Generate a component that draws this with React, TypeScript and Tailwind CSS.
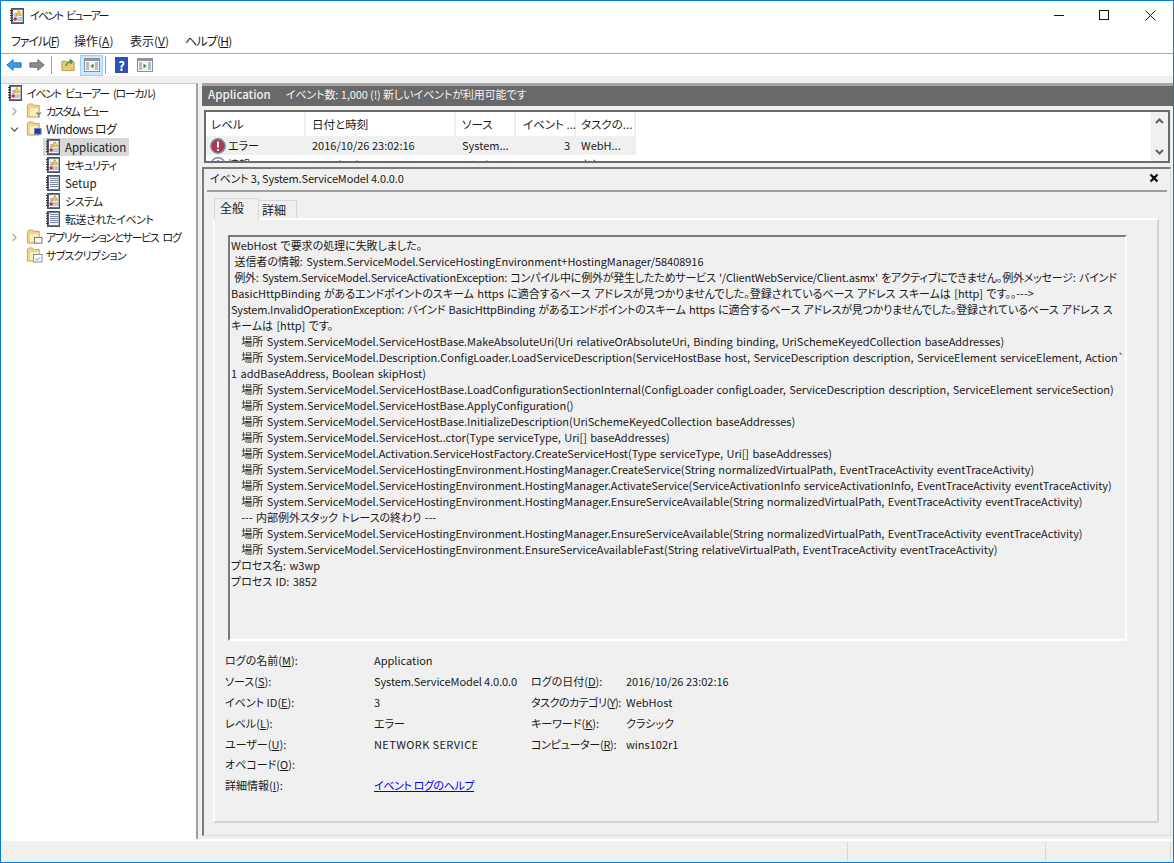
import type { ReactNode } from 'react';
import { ChevronDown, ChevronRight } from 'lucide-react';

const font = "font-['Noto_Sans_CJK_JP','Noto_Sans',sans-serif] [font-feature-settings:'palt']";

const bodyLines = [
  'WebHost で要求の処理に失敗しました。',
  ' 送信者の情報: System.ServiceModel.ServiceHostingEnvironment+HostingManager/58408916',
  ' 例外: System.ServiceModel.ServiceActivationException: コンパイル中に例外が発生したためサービス \'/ClientWebService/Client.asmx\' をアクティブにできません。例外メッセージ: バインド',
  'BasicHttpBinding があるエンドポイントのスキーム https に適合するベース アドレスが見つかりませんでした。登録されているベース アドレス スキームは [http] です。。--->',
  'System.InvalidOperationException: バインド BasicHttpBinding があるエンドポイントのスキーム https に適合するベース アドレスが見つかりませんでした。登録されているベース アドレス ス',
  'キームは [http] です。',
  '   場所 System.ServiceModel.ServiceHostBase.MakeAbsoluteUri(Uri relativeOrAbsoluteUri, Binding binding, UriSchemeKeyedCollection baseAddresses)',
  '   場所 System.ServiceModel.Description.ConfigLoader.LoadServiceDescription(ServiceHostBase host, ServiceDescription description, ServiceElement serviceElement, Action`',
  '1 addBaseAddress, Boolean skipHost)',
  '   場所 System.ServiceModel.ServiceHostBase.LoadConfigurationSectionInternal(ConfigLoader configLoader, ServiceDescription description, ServiceElement serviceSection)',
  '   場所 System.ServiceModel.ServiceHostBase.ApplyConfiguration()',
  '   場所 System.ServiceModel.ServiceHostBase.InitializeDescription(UriSchemeKeyedCollection baseAddresses)',
  '   場所 System.ServiceModel.ServiceHost..ctor(Type serviceType, Uri[] baseAddresses)',
  '   場所 System.ServiceModel.Activation.ServiceHostFactory.CreateServiceHost(Type serviceType, Uri[] baseAddresses)',
  '   場所 System.ServiceModel.ServiceHostingEnvironment.HostingManager.CreateService(String normalizedVirtualPath, EventTraceActivity eventTraceActivity)',
  '   場所 System.ServiceModel.ServiceHostingEnvironment.HostingManager.ActivateService(ServiceActivationInfo serviceActivationInfo, EventTraceActivity eventTraceActivity)',
  '   場所 System.ServiceModel.ServiceHostingEnvironment.HostingManager.EnsureServiceAvailable(String normalizedVirtualPath, EventTraceActivity eventTraceActivity)',
  '   --- 内部例外スタック トレースの終わり ---',
  '   場所 System.ServiceModel.ServiceHostingEnvironment.HostingManager.EnsureServiceAvailable(String normalizedVirtualPath, EventTraceActivity eventTraceActivity)',
  '   場所 System.ServiceModel.ServiceHostingEnvironment.EnsureServiceAvailableFast(String relativeVirtualPath, EventTraceActivity eventTraceActivity)',
  'プロセス名: w3wp',
  'プロセス ID: 3852',
];

function Mn({ label, k, tail = ':', className = '' }: { label: string; k: string; tail?: string; className?: string }) {
  return (
    <span className={`whitespace-nowrap ${className}`}>
      {label}(<span className="underline">{k}</span>){tail}
    </span>
  );
}

function LogBook({ warn = false, size = 16 }: { warn?: boolean; size?: number }) {
  return (
    <svg width={size} height={size} viewBox="0 0 16 16" className="shrink-0">
      <rect x="2.5" y="0.5" width="12" height="15" fill="#6d7890" stroke="#4a5266" />
      <rect x="4" y="2" width="9.5" height="12" fill="#f2f4f8" />
      <path d="M1 2.5h3M1 5h3M1 7.5h3M1 10h3M1 12.5h3" stroke="#333" />
      {warn ? (
        <>
          <path d="M5 6h3M5 8h3M8 10h5M8 12h5" stroke="#8d97ab" />
          <path d="M9.8 2.5l2.9 4.8H6.9z" fill="#f5d328" stroke="#b58a10" strokeWidth="0.6" />
          <circle cx="6.2" cy="11" r="1.8" fill="#c8303a" />
        </>
      ) : (
        <path d="M5 3.5h8M5 5.5h8M5 7.5h8M5 9.5h8M5 11.5h8" stroke="#7d89a0" />
      )}
    </svg>
  );
}

function Folder({ children }: { children?: ReactNode }) {
  return (
    <svg width="17" height="16" viewBox="0 0 18 17" className="shrink-0">
      <path d="M1.5 15V2.5L3 1h4l1 1.5h6V15z" fill="#f2d58a" stroke="#c5a45a" />
      <path d="M3.5 5h10v9h-10z" fill="#fbeebf" stroke="#e2c77c" strokeWidth="0.6" />
      {children}
    </svg>
  );
}

function TreeRow({
  indent,
  arrow,
  icon,
  label,
  labelClass = '',
  selected = false,
}: {
  indent: string;
  arrow?: 'right' | 'down';
  icon: ReactNode;
  label: string;
  labelClass?: string;
  selected?: boolean;
}) {
  return (
    <div className={`flex h-[18px] items-center ${indent}`}>
      {arrow && (
        <span className="mr-[5px] flex w-[14px] shrink-0 justify-center">
          {arrow === 'right' && <ChevronRight size={13} strokeWidth={2} className="text-[#a6a6a6]" />}
          {arrow === 'down' && <ChevronDown size={13} strokeWidth={2} className="text-[#404040]" />}
        </span>
      )}
      <span
        className={`flex h-[18px] items-center whitespace-nowrap leading-[18px] ${selected ? '-ml-[2px] bg-[#d9d9d9] pl-[2px] pr-[3px]' : ''}`}
      >
        <span className="flex w-[16px] shrink-0 justify-center">{icon}</span>
        <span className={`ml-[4px] ${labelClass}`}>{label}</span>
      </span>
    </div>
  );
}

function PanelIcon({ side }: { side: 'left' | 'right' }) {
  return (
    <svg width="16" height="14" viewBox="0 0 16 14">
      <rect x="0.5" y="0.5" width="15" height="13" fill="#f4f4f4" stroke="#8a8f98" />
      <rect x="1" y="1" width="14" height="2" fill="#8d97a6" />
      <path d="M2 5h3M2 7h3M2 9h3M2 11h3M11 5h3M11 7h3M11 9h3M11 11h3" stroke="#7f8790" />
      {side === 'left' ? <path d="M9.5 5.5v5L6.5 8z" fill="#2f9a3c" /> : <path d="M6.5 5.5v5l3-2.5z" fill="#2f9a3c" />}
    </svg>
  );
}

export default function App() {
  return (
    <div className={`${font} flex h-[863px] w-[1174px] flex-col overflow-hidden border border-[#0a7bd0] bg-white text-[11px] leading-none text-[#1a1a1a]`}>
      {/* title bar */}
      <div className="flex h-[29px] shrink-0 items-center">
        <span className="ml-[8px]"><LogBook warn /></span>
        <span className="ml-[5px] pb-[1px] tracking-[-1.7px] [word-spacing:3px]">イベント ビューアー</span>
        <div className="ml-auto flex items-center">
          <svg width="46" height="29" viewBox="0 0 46 29"><path d="M18 14.5h10" stroke="#111" /></svg>
          <svg width="46" height="29" viewBox="0 0 46 29"><rect x="17.5" y="9.5" width="9" height="9" fill="none" stroke="#111" /></svg>
          <svg width="45" height="29" viewBox="0 0 45 29"><path d="M17.5 9.5l10 10M27.5 9.5l-10 10" stroke="#111" /></svg>
        </div>
      </div>

      {/* menu */}
      <div className="flex h-[24px] shrink-0 items-center border-b border-[#a9a9b4] pb-[1px] pl-[10px] text-[12px]">
        <span className="w-[63px]"><Mn label="ファイル" k="F" tail="" className="tracking-[-1.2px]" /></span>
        <span className="w-[56px]"><Mn label="操作" k="A" tail="" /></span>
        <span className="w-[55px]"><Mn label="表示" k="V" tail="" /></span>
        <span><Mn label="ヘルプ" k="H" tail="" className="tracking-[-0.8px]" /></span>
      </div>

      {/* toolbar */}
      <div className="flex h-[22px] shrink-0 items-center pl-[5px]">
        <svg width="16" height="14" viewBox="0 0 18 14"><path d="M1 7l7-6v3.5h9v5H8V13z" fill="#3d9de2" stroke="#1c6fb5" /></svg>
        <svg width="16" height="14" viewBox="0 0 18 14" className="ml-[7px]"><path d="M17 7l-7-6v3.5H1v5h9V13z" fill="#8c8c8c" stroke="#666" /></svg>
        <span className="ml-[6px] h-[18px] w-px bg-[#a0a0a0]" />
        <svg width="15" height="16" viewBox="0 0 16 16" className="ml-[9px]">
          <path d="M1 14V4h5l1 1h7v9z" fill="#eccb72" stroke="#b8974a" />
          <path d="M5 9c2-4 4-5 6-5M9 2l3 2-2 3" fill="none" stroke="#3aa04a" strokeWidth="1.6" />
        </svg>
        <span className="ml-[4px] flex h-[21px] w-[23px] items-center justify-center border border-[#99d1ff] bg-[#cce8ff]">
          <PanelIcon side="left" />
        </span>
        <span className="ml-[2px] h-[18px] w-px bg-[#a0a0a0]" />
        <span className="ml-[9px] flex h-[16px] w-[13px] items-center justify-center bg-[#2f4fb5] text-[13px] font-bold text-white">?</span>
        <span className="ml-[9px] flex"><PanelIcon side="right" /></span>
      </div>

      {/* body */}
      <div className="flex min-h-0 flex-1 flex-col bg-[#f0f0f0]">
        <div className="flex min-h-0 flex-1 pt-[7px]">
          {/* tree */}
          <div className="w-[197px] shrink-0 border-t border-r-2 border-[#a0a0a0] border-t-[#d0d0d0] bg-white">
            <TreeRow indent="pl-[6px]" icon={<LogBook warn />} label="イベント ビューアー (ローカル)" labelClass="tracking-[-1.3px] [word-spacing:3px]" />
            <TreeRow
              indent="pl-[6px]"
              arrow="right"
              label="カスタム ビュー"
              labelClass="tracking-[-1.8px] [word-spacing:3px]"
              icon={<Folder><path d="M10 10h7l-3 3v3h-1v-3z" fill="#7f8a96" /></Folder>}
            />
            <TreeRow
              indent="pl-[6px]"
              arrow="down"
              label="Windows ログ"
              labelClass="text-[12px] tracking-[-0.6px]"
              icon={<Folder><rect x="9" y="8" width="7" height="6" fill="#1f3fb0" stroke="#6a7fc0" /></Folder>}
            />
            <TreeRow indent="pl-[44px]" icon={<LogBook warn />} label="Application" labelClass="text-[11.5px]" selected />
            <TreeRow indent="pl-[44px]" icon={<LogBook warn />} label="セキュリティ" labelClass="tracking-[-1px]" />
            <TreeRow indent="pl-[44px]" icon={<LogBook />} label="Setup" labelClass="text-[11.5px]" />
            <TreeRow indent="pl-[44px]" icon={<LogBook warn />} label="システム" labelClass="tracking-[-0.6px]" />
            <TreeRow indent="pl-[44px]" icon={<LogBook />} label="転送されたイベント" labelClass="tracking-[-0.45px]" />
            <TreeRow
              indent="pl-[6px]"
              arrow="right"
              label="アプリケーションとサービス ログ"
              labelClass="tracking-[-1.3px] [word-spacing:3px]"
              icon={<Folder><rect x="9" y="9" width="8" height="6" fill="#f4f4f4" stroke="#777" /></Folder>}
            />
            <TreeRow
              indent="pl-[25px]"
              label="サブスクリプション"
              labelClass="tracking-[-0.8px]"
              icon={<Folder><rect x="8" y="8" width="9" height="8" fill="#fff" stroke="#7a8aa0" /><path d="M10 13l2 1 3-3" stroke="#3a7" fill="none" /></Folder>}
            />
          </div>

          {/* main */}
          <div className="ml-[4px] flex min-w-0 flex-1 flex-col">
            <div className="flex h-[23px] shrink-0 items-center border-t-[3px] border-[#a6a6a6] bg-[#696969] pb-[3px] pl-[6px] text-[#f4f4f4]">
              <span className="text-[11.5px] font-medium">Application</span>
              <span className="ml-[15px] tracking-[-0.1px]">イベント数: 1,000 (!) 新しいイベントが利用可能です</span>
            </div>

            {/* event list */}
            <div className="ml-[2px] mr-[3px] mt-[4px] h-[53px] shrink-0 overflow-hidden border-2 border-[#6b6b6b] bg-white">
              <div className="flex h-full">
                <div className="flex-1 overflow-hidden">
                  <div className="flex h-[24px] items-center whitespace-nowrap text-[11.5px]">
                    <span className="w-[100px] border-r-2 border-[#f0f0f0] pl-[5px] leading-[24px]">レベル</span>
                    <span className="w-[150px] border-r-2 border-[#f0f0f0] pl-[6px] leading-[24px]">日付と時刻</span>
                    <span className="w-[60px] border-r-2 border-[#f0f0f0] pl-[6px] leading-[24px]">ソース</span>
                    <span className="w-[60px] border-r-2 border-[#f0f0f0] pl-[7px] leading-[24px]">イベント ...</span>
                    <span className="w-[60px] border-r-2 border-[#f0f0f0] pl-[5px] leading-[24px]">タスクの...</span>
                  </div>
                  <div className="flex h-[19px] w-[430px] items-center whitespace-nowrap bg-[#f0f0f0]">
                    <span className="flex w-[100px] items-center pl-[4px]">
                      <svg width="16" height="16" viewBox="0 0 16 16" className="shrink-0">
                        <circle cx="8" cy="8" r="7.2" fill="#a83a55" stroke="#7d8aa5" strokeWidth="1.4" />
                        <path d="M8 3.5v6" stroke="#fff" strokeWidth="2" />
                        <circle cx="8" cy="12" r="1.1" fill="#fff" />
                      </svg>
                      <span className="ml-[2px]">エラー</span>
                    </span>
                    <span className="w-[150px] pl-[6px]">2016/10/26 23:02:16</span>
                    <span className="w-[60px] pl-[6px]">System...</span>
                    <span className="w-[60px] pr-[6px] text-right">3</span>
                    <span className="w-[60px] pl-[5px]">WebH...</span>
                  </div>
                  <div className="flex h-[19px] w-[430px] items-center whitespace-nowrap">
                    <span className="flex w-[100px] items-center pl-[4px]">
                      <svg width="16" height="16" viewBox="0 0 16 16" className="shrink-0">
                        <circle cx="8" cy="8" r="7.2" fill="#fff" stroke="#7d8aa5" strokeWidth="1.4" />
                        <circle cx="8" cy="4.5" r="1.2" fill="#2a4fb0" />
                      </svg>
                      <span className="ml-[2px]">情報</span>
                    </span>
                    <span className="w-[150px] pl-[6px]">2016/10/26 23:00:00</span>
                    <span className="w-[60px] pl-[6px]">Wind...</span>
                    <span className="w-[60px] pr-[6px] text-right">1001</span>
                    <span className="w-[60px] pl-[5px]">なし</span>
                  </div>
                </div>
                <div className="flex w-[17px] shrink-0 flex-col items-center justify-between bg-[#f0f0f0] py-[6px]">
                  <svg width="9" height="6" viewBox="0 0 9 6"><path d="M1 5l3.5-3.5L8 5" fill="none" stroke="#606060" strokeWidth="2" /></svg>
                  <svg width="9" height="6" viewBox="0 0 9 6"><path d="M1 1l3.5 3.5L8 1" fill="none" stroke="#606060" strokeWidth="2" /></svg>
                </div>
              </div>
            </div>

            {/* detail pane */}
            <div className="mb-[3px] mr-[2px] mt-[4px] flex min-h-0 flex-1 flex-col border border-t-2 border-l-2 border-[#dcdcdc] border-t-[#7a7a7a] border-l-[#7a7a7a] pl-[3px]">
              <div className="mr-[2px] flex h-[21px] shrink-0 items-center pb-[3px] pl-[3px]">
                <span className="tracking-[-0.15px]">イベント 3, System.ServiceModel 4.0.0.0</span>
                <svg width="10" height="10" viewBox="0 0 10 10" className="ml-auto mr-[9px]"><path d="M1.5 1.5l7 7M8.5 1.5l-7 7" stroke="#000" strokeWidth="2.2" /></svg>
              </div>
              <div className="mr-[3px] h-[2px] shrink-0 bg-[#a0a0a0]" />

              {/* tabs */}
              <div className="mt-[6px] flex h-[20px] shrink-0 items-end pl-[7px] text-[12px]">
                <span className="z-10 -mb-[2px] flex h-[22px] w-[45px] items-center border-x border-t border-[#d9d9d9] bg-[#f0f0f0] pb-[3px] pl-[5px]">全般</span>
                <span className="flex h-[18px] w-[38px] items-center border-r border-t border-[#d9d9d9] bg-[#f0f0f0] pl-[3px]">詳細</span>
              </div>

              <div className="mb-[12px] ml-[6px] mr-[11px] flex min-h-0 flex-1 flex-col border-2 border-white border-r-[#d4d4d4] border-b-[#d4d4d4] bg-[#f0f0f0]">
                <div className="ml-[13px] mr-[30px] mt-[15px] h-[406px] shrink-0 overflow-hidden border-2 border-white border-t-[#7a7a7a] border-l-[#7a7a7a] pl-[1px] text-[11px] [word-spacing:1px]">
                  {bodyLines.map((line, i) => (
                    <div
                      key={i}
                      className={`h-[16px] whitespace-pre leading-[16px] ${i === 2 || i === 4 ? 'tracking-[-0.2px]' : 'tracking-[-0.03px]'}`}
                    >
                      {line}
                    </div>
                  ))}
                </div>

                <div className="ml-[10px] mt-[9px] grid grid-cols-[149px_157px_95px_1fr] auto-rows-[20.9px] items-center">
                  <Mn label="ログの名前" k="M" />
                  <span className="col-span-3">Application</span>
                  <Mn label="ソース" k="S" />
                  <span className="tracking-[-0.1px]">System.ServiceModel 4.0.0.0</span>
                  <Mn label="ログの日付" k="D" />
                  <span>2016/10/26 23:02:16</span>
                  <Mn label="イベント ID" k="E" />
                  <span>3</span>
                  <Mn label="タスクのカテゴリ" k="Y" className="tracking-[-0.5px]" />
                  <span>WebHost</span>
                  <Mn label="レベル" k="L" />
                  <span>エラー</span>
                  <Mn label="キーワード" k="K" />
                  <span>クラシック</span>
                  <Mn label="ユーザー" k="U" />
                  <span className="tracking-[0.4px]">NETWORK SERVICE</span>
                  <Mn label="コンピューター" k="R" className="tracking-[-0.3px]" />
                  <span>wins102r1</span>
                  <span className="col-span-4"><Mn label="オペコード" k="O" /></span>
                  <Mn label="詳細情報" k="I" />
                  <span className="col-span-3 text-[#0000ee] underline tracking-[-0.4px]">イベント ログのヘルプ</span>
                </div>
              </div>
            </div>
          </div>
        </div>

        {/* status bar */}
        <div className="flex h-[23px] shrink-0 border-t-2 border-white py-[1px]">
          <span className="ml-auto h-full w-px bg-[#d9d9d9]" />
          <span className="ml-[197px] h-full w-px bg-[#d9d9d9]" />
          <span className="ml-[124px] mr-[2px] h-full w-px bg-[#d9d9d9]" />
        </div>
      </div>
    </div>
  );
}
